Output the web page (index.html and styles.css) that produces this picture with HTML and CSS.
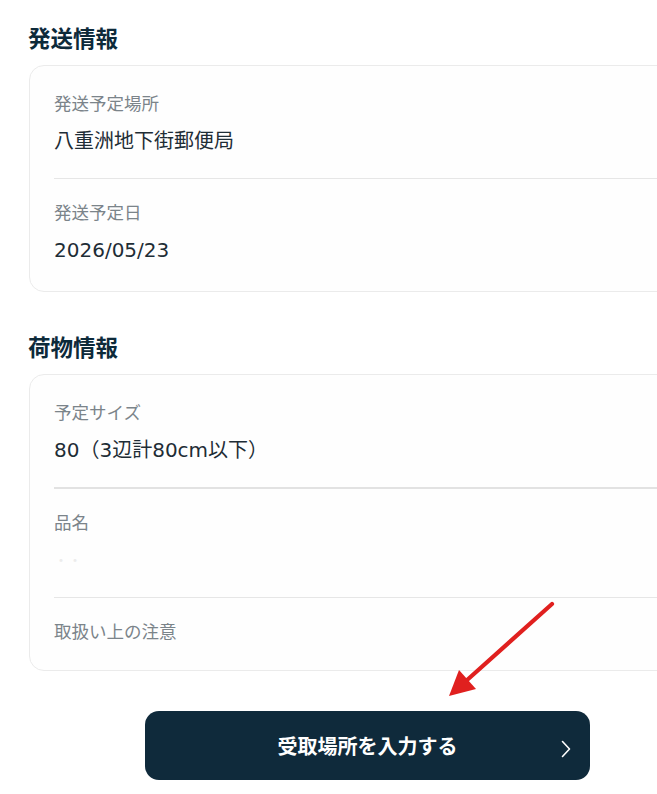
FILE: index.html
```html
<!DOCTYPE html>
<html lang="ja">
<head>
<meta charset="utf-8">
<title>発送情報</title>
<link rel="stylesheet" href="styles.css">
</head>
<body>
<div class="viewport">
  <main class="page">
    <section class="section">
      <h2 class="section-title">発送情報</h2>
      <div class="card">
        <div class="row">
          <div class="label">発送予定場所</div>
          <div class="value">八重洲地下街郵便局</div>
        </div>
        <div class="row">
          <div class="label">発送予定日</div>
          <div class="value">2026/05/23</div>
        </div>
      </div>
    </section>

    <section class="section section-second">
      <h2 class="section-title">荷物情報</h2>
      <div class="card">
        <div class="row row-thick">
          <div class="label">予定サイズ</div>
          <div class="value">80（3辺計80cm以下）</div>
        </div>
        <div class="row">
          <div class="label">品名</div>
          <div class="value value-hidden">・・</div>
        </div>
        <div class="row">
          <div class="label">取扱い上の注意</div>
        </div>
      </div>
    </section>

    <div class="actions">
      <button class="primary-btn" type="button">
        <span class="btn-text">受取場所を入力する</span>
        <svg class="chevron" width="10" height="18" viewBox="0 0 10 18" aria-hidden="true">
          <path d="M1.5 1.5 L8.5 9 L1.5 16.5" fill="none" stroke="#ffffff" stroke-width="1.6" stroke-linecap="round" stroke-linejoin="round"/>
        </svg>
      </button>
    </div>
  </main>

  <svg class="annotation" width="657" height="794" viewBox="0 0 657 794" aria-hidden="true">
    <line x1="552" y1="604" x2="466" y2="681" stroke="#e0201f" stroke-width="4.2" stroke-linecap="round"/>
    <polygon points="449,696 459,670 476,689" fill="#e0201f"/>
  </svg>
</div>
</body>
</html>
```

FILE: styles.css
```css
* {
  box-sizing: border-box;
}

html, body {
  margin: 0;
  padding: 0;
  background: #ffffff;
  overflow: hidden;
}

body {
  font-family: "DejaVu Sans", "Noto Sans CJK JP", sans-serif;
  color: #1e2d36;
}

.viewport {
  position: relative;
  width: 657px;
  height: 794px;
  overflow: hidden;
}

.page {
  width: 677px;
  margin-left: 29px;
  padding-top: 20px;
}

.section-title {
  margin: 0 0 11px -1px;
  font-family: "Noto Sans CJK JP", sans-serif;
  font-size: 22.5px;
  line-height: 34px;
  font-weight: 700;
  color: #0d2a3a;
}

.section-second {
  margin-top: 37px;
}

.card {
  border: 1px solid #ebebeb;
  border-radius: 15px;
  background: #fefefe;
  padding: 0 24px;
}

.row {
  padding: 20px 0 22px;
  border-bottom: 1px solid #e6e6e6;
}

.row:first-child {
  padding-top: 24px;
}

.row:last-child {
  border-bottom: none;
  padding-bottom: 26px;
}

.row-thick {
  border-bottom: 2px solid #e2e2e2;
}

.label {
  font-family: "Noto Sans CJK JP", sans-serif;
  font-size: 17.5px;
  line-height: 26px;
  height: 26px;
  color: #7b848a;
}

.value {
  margin-top: 10px;
  font-size: 20px;
  line-height: 30px;
  height: 30px;
  color: #1e2d36;
}

.value-hidden {
  color: #ececec;
  font-size: 14px;
}

.actions {
  display: flex;
  justify-content: center;
  margin-top: 40px;
}

.primary-btn {
  position: relative;
  width: 445px;
  height: 69px;
  border: none;
  border-radius: 14px;
  background: #0f2a3b;
  color: #ffffff;
  font-family: "Noto Sans CJK JP", sans-serif;
  font-size: 20px;
  font-weight: 700;
  display: flex;
  align-items: center;
  justify-content: center;
  padding: 0;
}

.btn-text {
  line-height: 30px;
}

.chevron {
  position: absolute;
  right: 19px;
  top: 38px;
  transform: translateY(-50%);
}

.annotation {
  position: absolute;
  left: 0;
  top: 0;
  pointer-events: none;
}
```
